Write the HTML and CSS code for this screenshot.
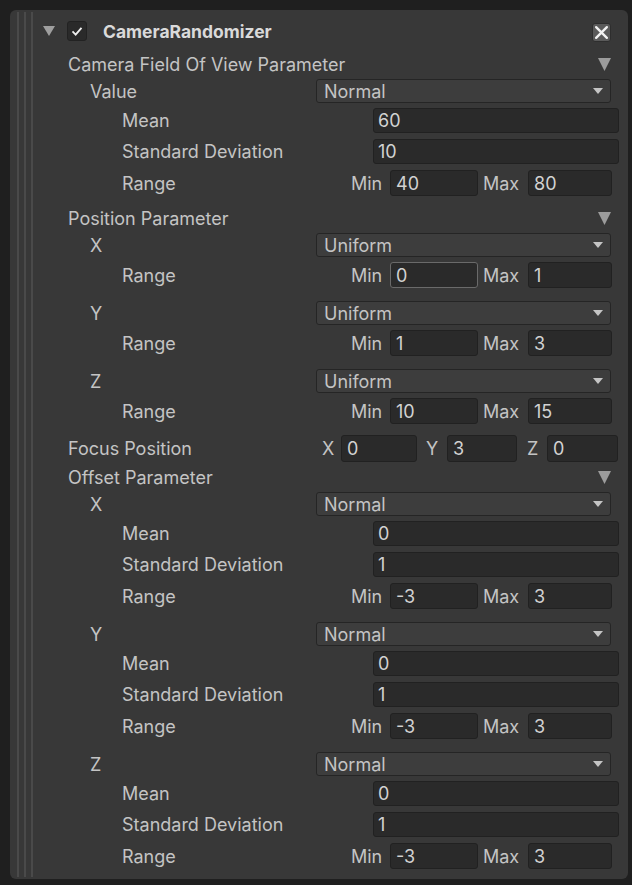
FILE: index.html
```html
<!DOCTYPE html>
<html>
<head>
<meta charset="utf-8">
<link rel="stylesheet" href="styles.css">
</head>
<body>
<div class="panel">
  <div class="gutter"></div>
  <div class="content">
    <div class="title-row">
      <svg class="tri-title" width="12" height="10" viewBox="0 0 12 10"><polygon points="0,0 12,0 6,10" fill="#9e9e9e"/></svg>
      <span class="check"><svg width="20" height="20" viewBox="0 0 20 20"><polyline points="5,10.5 8.5,14 15,6.5" fill="none" stroke="#f0f0f0" stroke-width="2"/></svg></span>
      <span class="title">CameraRandomizer</span>
      <span class="close"><svg width="19" height="19" viewBox="0 0 19 19"><path d="M3.5 3.5 L15.5 15.5 M15.5 3.5 L3.5 15.5" stroke="#f2f2f2" stroke-width="2.6" stroke-linecap="round"/></svg></span>
    </div>

    <div class="row hdr l1"><span class="label">Camera Field Of View Parameter</span><svg class="fold" width="13" height="13" viewBox="0 0 13 13"><polygon points="0,0 13,0 6.5,13" fill="#9c9c9c"/></svg></div>
    <div class="row dd l2"><span class="label">Value</span><div class="popup">Normal<span class="caret"></span></div></div>
    <div class="row fld l3"><span class="label">Mean</span><div class="field">60</div></div>
    <div class="row fld l3"><span class="label">Standard Deviation</span><div class="field">10</div></div>
    <div class="row mm l3"><span class="label">Range</span><div class="minmax"><span class="mm-min">Min</span><div class="field f-min">40</div><span class="mm-max">Max</span><div class="field f-max">80</div></div></div>

    <div class="row hdr l1"><span class="label">Position Parameter</span><svg class="fold" width="13" height="13" viewBox="0 0 13 13"><polygon points="0,0 13,0 6.5,13" fill="#9c9c9c"/></svg></div>
    <div class="row dd l2"><span class="label">X</span><div class="popup">Uniform<span class="caret"></span></div></div>
    <div class="row mm l3"><span class="label">Range</span><div class="minmax"><span class="mm-min">Min</span><div class="field f-min focused">0</div><span class="mm-max">Max</span><div class="field f-max">1</div></div></div>
    <div class="row dd l2"><span class="label">Y</span><div class="popup">Uniform<span class="caret"></span></div></div>
    <div class="row mm l3"><span class="label">Range</span><div class="minmax"><span class="mm-min">Min</span><div class="field f-min">1</div><span class="mm-max">Max</span><div class="field f-max">3</div></div></div>
    <div class="row dd l2"><span class="label">Z</span><div class="popup">Uniform<span class="caret"></span></div></div>
    <div class="row mm l3"><span class="label">Range</span><div class="minmax"><span class="mm-min">Min</span><div class="field f-min">10</div><span class="mm-max">Max</span><div class="field f-max">15</div></div></div>

    <div class="row vec l1"><span class="label">Focus Position</span><div class="vector"><span class="vl vx">X</span><div class="field fx">0</div><span class="vl vy">Y</span><div class="field fy">3</div><span class="vl vz">Z</span><div class="field fz">0</div></div></div>

    <div class="row hdr l1"><span class="label">Offset Parameter</span><svg class="fold" width="13" height="13" viewBox="0 0 13 13"><polygon points="0,0 13,0 6.5,13" fill="#9c9c9c"/></svg></div>
    <div class="row dd l2"><span class="label">X</span><div class="popup">Normal<span class="caret"></span></div></div>
    <div class="row fld l3"><span class="label">Mean</span><div class="field">0</div></div>
    <div class="row fld l3"><span class="label">Standard Deviation</span><div class="field">1</div></div>
    <div class="row mm l3"><span class="label">Range</span><div class="minmax"><span class="mm-min">Min</span><div class="field f-min">-3</div><span class="mm-max">Max</span><div class="field f-max">3</div></div></div>
    <div class="row dd l2"><span class="label">Y</span><div class="popup">Normal<span class="caret"></span></div></div>
    <div class="row fld l3"><span class="label">Mean</span><div class="field">0</div></div>
    <div class="row fld l3"><span class="label">Standard Deviation</span><div class="field">1</div></div>
    <div class="row mm l3"><span class="label">Range</span><div class="minmax"><span class="mm-min">Min</span><div class="field f-min">-3</div><span class="mm-max">Max</span><div class="field f-max">3</div></div></div>
    <div class="row dd l2"><span class="label">Z</span><div class="popup">Normal<span class="caret"></span></div></div>
    <div class="row fld l3"><span class="label">Mean</span><div class="field">0</div></div>
    <div class="row fld l3"><span class="label">Standard Deviation</span><div class="field">1</div></div>
    <div class="row mm l3"><span class="label">Range</span><div class="minmax"><span class="mm-min">Min</span><div class="field f-min">-3</div><span class="mm-max">Max</span><div class="field f-max">3</div></div></div>
  </div>
</div>
</body>
</html>
```
FILE: styles.css
```css
* { box-sizing: border-box; }
html, body { margin: 0; }
body {
  background: #1f1f1f;
  padding: 10px 4px 6px 10px;
  font-family: Inter, "Noto Sans", sans-serif;
  font-size: 18px;
  color: #c4c4c4;
}
.panel {
  display: flex;
  width: 618px;
  height: 869px;
  background: #383838;
  border-radius: 6px;
}
.gutter {
  width: 26px;
  margin: 2px 0;
  background:
    linear-gradient(to right,
      transparent 7px, #4a4a4a 7px, #4a4a4a 9px, transparent 9px,
      transparent 14px, #4a4a4a 14px, #4a4a4a 16px, transparent 16px,
      transparent 21px, #4a4a4a 21px, #4a4a4a 23px, transparent 23px);
}
.content {
  flex: 1;
  display: flex;
  flex-direction: column;
  padding-right: 9px;
}
.title-row {
  height: 42px;
  display: flex;
  align-items: center;
  padding-left: 7px;
}
.check {
  width: 20px;
  height: 20px;
  margin-left: 12px;
  background: #2a2a2a;
  border: 1px solid #222;
  border-radius: 3px;
  display: flex;
  align-items: center;
  justify-content: center;
}
.check svg { display: block; }
.title {
  margin-left: 16px;
  font-weight: 700;
  color: #dadada;
  font-size: 17.5px;
}
.close {
  margin-left: auto;
  margin-right: 8px;
  margin-top: 2px;
  width: 19px;
  height: 19px;
  background: #5a5a5a;
  border: 1px solid #2e2e2e;
  border-radius: 3px;
  display: flex;
  align-items: center;
  justify-content: center;
}
.close svg { display: block; width: 17px; height: 17px; }

.row {
  display: flex;
  align-items: center;
}
.label { white-space: nowrap; flex: 0 0 auto; }
.l1 .label { padding-left: 32px; }
.l2 .label { padding-left: 54px; }
.l3 .label { padding-left: 86px; }

.hdr { height: 24px; }
.dd { height: 24px; }
.fld { height: 25px; }
.mm { height: 26px; }
.vec { height: 26px; }

.hdr + .dd { margin-top: 3px; }
.dd + .fld { margin-top: 5px; }
.fld + .fld { margin-top: 6px; }
.fld + .mm { margin-top: 6px; }
.dd + .mm { margin-top: 5px; }
.mm + .dd { margin-top: 13px; }
.mm + .hdr { margin-top: 10px; }
.mm + .vec { margin-top: 11px; }
.vec + .hdr { margin-top: 4px; }

.fold { margin-left: auto; margin-right: 8px; display: block; }

.dd .label, .vec .label { width: 280px; }
.fld .label { width: 337px; }
.mm .label { width: 315px; }

.popup {
  flex: 1;
  height: 24px;
  margin-right: 8px;
  background: #3d3d3d;
  border: 1px solid #252525;
  border-radius: 3px;
  display: flex;
  align-items: center;
  padding-left: 7px;
}
.caret {
  margin-left: auto;
  margin-right: 7px;
  width: 0;
  height: 0;
  border-left: 5px solid transparent;
  border-right: 5px solid transparent;
  border-top: 6px solid #c4c4c4;
}
.field {
  height: 25px;
  background: #2a2a2a;
  border: 1px solid #212121;
  border-radius: 3px;
  display: flex;
  align-items: center;
  padding-left: 4px;
  color: #d2d2d2;
}
.fld .field { flex: 1; }
.minmax, .vector {
  flex: 1;
  display: flex;
  align-items: center;
}
.mm-min { width: 39px; }
.mm-max { width: 45px; margin-left: 5px; }
.minmax .field { height: 26px; padding-left: 5px; }
.f-min { width: 88px; }
.f-max { width: 84px; }
.focused { border-color: #6a6a6a; }

.vector .field { height: 27px; padding-left: 5px; }
.vl { flex: 0 0 auto; }
.vx { width: 25px; padding-left: 6px; }
.vy { width: 21px; margin-left: 9px; }
.vz { width: 20px; margin-left: 10px; }
.fx { width: 76px; }
.fy { width: 70px; }
.fz { width: 71px; }
```
